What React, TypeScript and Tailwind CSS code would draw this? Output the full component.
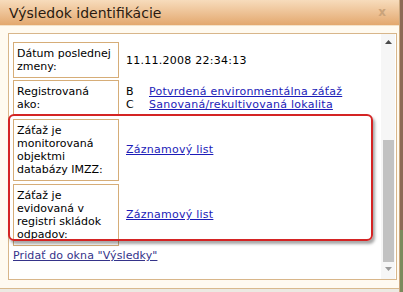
import React from "react";

const rows = [
  { label: ["Dátum poslednej", "zmeny:"], kind: "date" },
  { label: ["Registrovaná", "ako:"], kind: "reg" },
  { label: ["Záťaž je", "monitorovaná", "objektmi", "databázy IMZZ:"], kind: "link" },
  { label: ["Záťaž je", "evidovaná v", "registri skládok", "odpadov:"], kind: "link" },
];

function Value({ kind }: { kind: string }) {
  if (kind === "date") return <span>11.11.2008 22:34:13</span>;
  if (kind === "reg")
    return (
      <div className="grid grid-cols-[23px_1fr]">
        <span>B</span>
        <a className="text-[#1c1cb8] underline">Potvrdená environmentálna záťaž</a>
        <span>C</span>
        <a className="text-[#1c1cb8] underline">Sanovaná/rekultivovaná lokalita</a>
      </div>
    );
  return <a className="text-[#1c1cb8] underline">Záznamový list</a>;
}

export default function App() {
  return (
    <div className="flex w-[403px] h-[292px] overflow-hidden bg-[#ece9e2] font-['DejaVu_Sans',sans-serif] text-[11px] leading-[13px] text-black">
      <div className="relative flex flex-col w-[399px] h-[289px] bg-[#fffaf0] border-b border-[#d9b98c]">
        {/* title bar */}
        <div className="flex items-center justify-between h-[26px] pl-[9px] pr-[13px] bg-gradient-to-b from-[#f7dcbc] to-[#e3a86e] border-b border-[#f4e2c8]">
          <span className="text-[14px] text-[#2a1a10] pt-[1px]">Výsledok identifikácie</span>
          <span className="text-[12px] font-bold text-[#caa37a]">x</span>
        </div>

        {/* content panel */}
        <div className="flex mt-[7px] ml-[8px] mr-[2px] h-[247px] bg-white border border-[#d8b68a]">
          <div className="flex-1 flex flex-col pl-[4px] pt-[8px]">
            <div className="grid grid-cols-[106px_1fr] gap-y-[2px] gap-x-[7px]">
              {rows.map((r, i) => (
                <React.Fragment key={i}>
                  <div className={`border border-[#d6ad78] px-[3px] py-[4px] ${i >= 2 ? "mt-[1px]" : ""}`}>
                    {r.label.map((l, j) => (
                      <div key={j}>{l}</div>
                    ))}
                  </div>
                  <div className="flex items-center tracking-[0.25px]">
                    <Value kind={r.kind} />
                  </div>
                </React.Fragment>
              ))}
            </div>
            <a className="mt-[3px] text-[#35338a] underline tracking-[0.1px]">Pridať do okna "Výsledky"</a>
          </div>

          {/* scrollbar */}
          <div className="flex flex-col items-center w-[14px] mr-[1px] bg-[#f6f6f6]">
            <div className="h-[16px] flex items-center justify-center">
              <svg width="7" height="4" viewBox="0 0 7 4"><path d="M0 4 L3.5 0 L7 4 Z" fill="#4a4a4a" /></svg>
            </div>
            <div className="mt-[90px] w-[11px] h-[122px] bg-[#c2c2c2]" />
            <div className="h-[14px] flex items-center justify-center">
              <svg width="7" height="4" viewBox="0 0 7 4"><path d="M0 0 L7 0 L3.5 4 Z" fill="#9a9a9a" /></svg>
            </div>
          </div>
        </div>

        {/* red highlight */}
        <div className="absolute left-[8px] top-[114px] w-[365px] h-[127px] rounded-[6px] border-2 border-[#d42424] shadow-[2px_3px_3px_rgba(0,0,0,0.35)] pointer-events-none" />
      </div>
      <div className="flex flex-col w-[4px] border-l border-[#c9a77e]">
        <div className="h-[230px] bg-[#8c6a55]" />
        <div className="flex-1 bg-[#7a8a5c]" />
      </div>
    </div>
  );
}
